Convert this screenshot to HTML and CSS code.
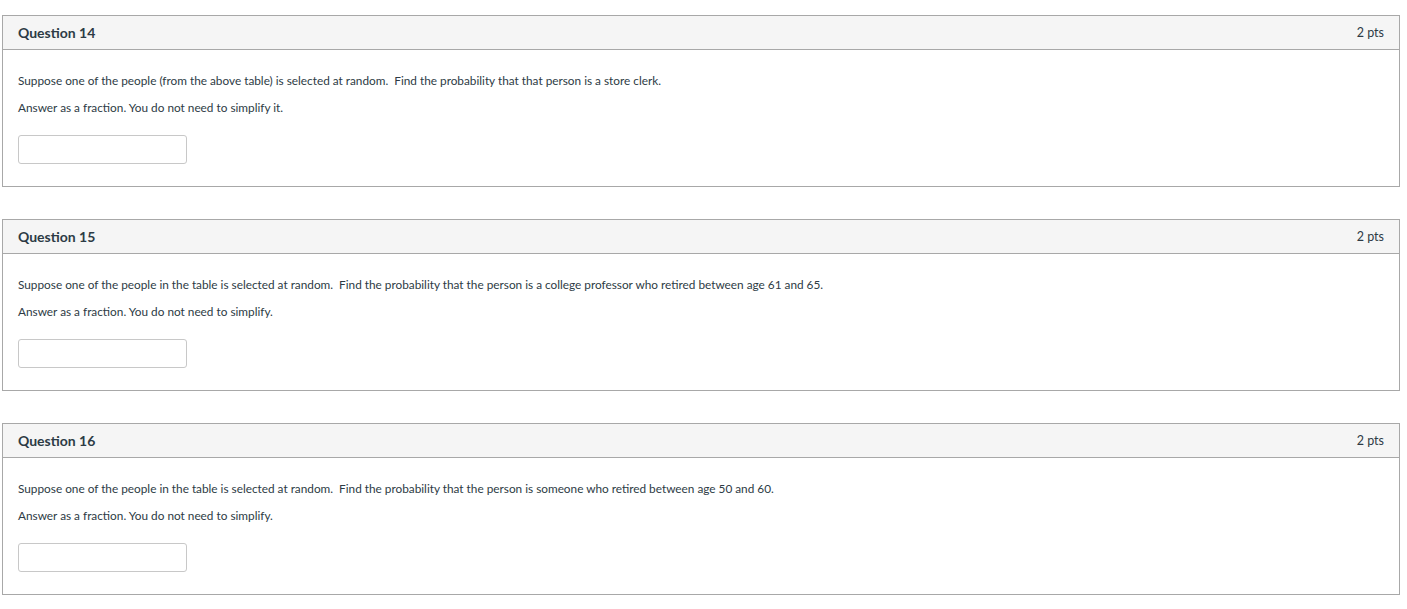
FILE: index.html
```html
<!DOCTYPE html>
<html>
<head>
<meta charset="utf-8">
<link rel="stylesheet" href="styles.css">
</head>
<body>
<div class="quiz">
  <section class="question">
    <header class="q-header">
      <span class="q-title">Question 14</span>
      <span class="q-points">2 pts</span>
    </header>
    <div class="q-body">
      <p class="q-text">Suppose one of the people (from the above table) is selected at random.&nbsp; Find the probability that that person is a store clerk.</p>
      <p class="q-text">Answer as a fraction. You do not need to simplify it.</p>
      <input class="q-input" type="text">
    </div>
  </section>
  <section class="question">
    <header class="q-header">
      <span class="q-title">Question 15</span>
      <span class="q-points">2 pts</span>
    </header>
    <div class="q-body">
      <p class="q-text">Suppose one of the people in the table is selected at random.&nbsp; Find the probability that the person is a college professor who retired between age 61 and 65.</p>
      <p class="q-text">Answer as a fraction. You do not need to simplify.</p>
      <input class="q-input" type="text">
    </div>
  </section>
  <section class="question">
    <header class="q-header">
      <span class="q-title">Question 16</span>
      <span class="q-points">2 pts</span>
    </header>
    <div class="q-body">
      <p class="q-text">Suppose one of the people in the table is selected at random.&nbsp; Find the probability that the person is someone who retired between age 50 and 60.</p>
      <p class="q-text">Answer as a fraction. You do not need to simplify.</p>
      <input class="q-input" type="text">
    </div>
  </section>
</div>
</body>
</html>
```
FILE: styles.css
```css
html, body {
  margin: 0;
  padding: 0;
  background: #ffffff;
}
body {
  font-family: Lato, "Open Sans", sans-serif;
  color: #2d3b45;
}
.quiz {
  display: flex;
  flex-direction: column;
  gap: 32px;
  padding: 15px 7px 0 2px;
}
.question {
  border: 1px solid #a8a8a8;
  height: 172px;
  box-sizing: border-box;
  display: flex;
  flex-direction: column;
}
.q-header {
  display: flex;
  justify-content: space-between;
  align-items: center;
  height: 33px;
  background: #f5f5f5;
  border-bottom: 1px solid #a8a8a8;
  padding: 0 15px 0 15px;
}
.q-title {
  font-size: 14px;
  font-weight: 700;
  color: #2d3b45;
}
.q-points {
  font-size: 12.5px;
  color: #2d3b45;
}
.q-body {
  padding: 24px 15px 0 15px;
  display: flex;
  flex-direction: column;
  align-items: flex-start;
}
.q-text {
  margin: 0 0 13px 0;
  font-size: 11.8px;
  line-height: 14px;
}
.q-input {
  margin-top: 7px;
  width: 169px;
  height: 29px;
  box-sizing: border-box;
  border: 1px solid #c8c8c8;
  border-radius: 3px;
  background: #fff;
  padding: 0;
}
```
